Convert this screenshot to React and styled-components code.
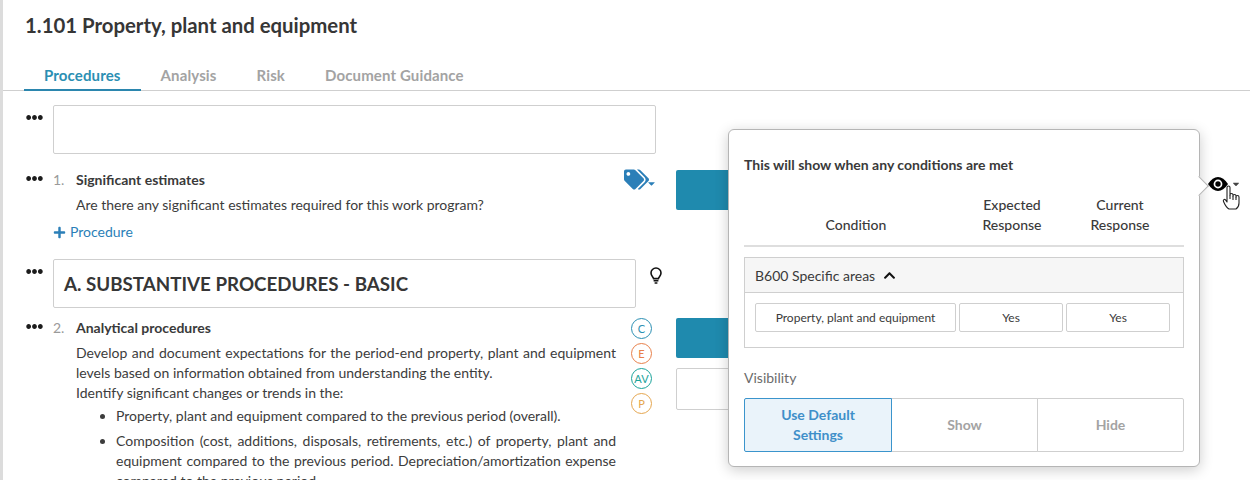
import React from "react";
import styled, { createGlobalStyle } from "styled-components";
import { FaEllipsisH, FaPlus, FaTags, FaChevronUp, FaCaretDown } from "react-icons/fa";

const GlobalStyle = createGlobalStyle`
    html, body {
        margin: 0;
        padding: 0;
        background: #fff;
        font-family: "Lato", "Liberation Sans", sans-serif;
        color: #3a3a3a;
    }
    #root {
        height: 480px;
    }
`;

const Page = styled.div`
    position: relative;
    width: 1250px;
    height: 480px;
    box-sizing: border-box;
    border-left: 3px solid #dcdcdc;
    overflow: hidden;
`;

const Title = styled.h1`
    margin: 0;
    padding: 13px 0 0 22px;
    height: 48px;
    font-size: 20.35px;
    line-height: 24px;
    font-weight: 700;
    color: #363636;
`;

const Tabs = styled.div`
    display: flex;
    height: 29px;
    padding-left: 21px;
    border-bottom: 1px solid #cfcfcf;
`;

const Tab = styled.div`
    box-sizing: border-box;
    height: 30px;
    padding: 4px 20px 0;
    font-size: 15px;
    letter-spacing: 0.13px;
    line-height: 20px;
    font-weight: 700;
    color: ${(p) => (p.$active ? "#2b8fb3" : "#a3a3a3")};
    border-bottom: ${(p) => (p.$active ? "2px solid #2b86ae" : "none")};
`;

const Body = styled.div`
    display: grid;
    grid-template-columns: 653px 300px;
    column-gap: 20px;
`;

const Rows = styled.div`
    padding-top: 14px;
`;

const Row = styled.div`
    display: flex;
    padding-left: 23px;
    margin-bottom: ${(p) => p.$gap || 0}px;
`;

const Dots = styled.div`
    flex: none;
    width: 27px;
    padding-top: ${(p) => (p.$box ? 4 : 0)}px;
    font-size: 17px;
    line-height: 0;
    color: #1c1c1c;
`;

const EmptyBox = styled.div`
    width: 601px;
    height: 47px;
    border: 1px solid #cfcfcf;
    border-radius: 2px;
`;

const HeadingBox = styled.div`
    flex: none;
    box-sizing: border-box;
    width: 583px;
    height: 49px;
    padding-left: 10px;
    border: 1px solid #cfcfcf;
    border-radius: 2px;
    font-size: 18.75px;
    line-height: 47px;
    font-weight: 700;
    color: #363636;
`;

const Bulb = styled.svg`
    flex: none;
    width: 12px;
    height: 17px;
    margin: 8px 0 0 14px;
    fill: none;
    stroke: #111;
    stroke-width: 1.6;
`;

const Num = styled.div`
    flex: none;
    width: 23px;
    font-size: 14px;
    line-height: 20px;
    color: #9a9a9a;
`;

const Item = styled.div`
    position: relative;
    width: 540px;
`;

const ItemTitle = styled.div`
    font-size: 14px;
    line-height: 20px;
    font-weight: 700;
    color: #3a3a3a;
    margin-bottom: 5px;
`;

const Para = styled.div`
    font-size: 14px;
    line-height: 20px;
    color: #3c3c3c;
    text-align: ${(p) => (p.$justify ? "justify" : "left")};
`;

const BulletList = styled.ul`
    margin: 3px 0 0;
    padding: 0 0 0 40px;
    font-size: 14px;
    line-height: 20px;
    color: #3c3c3c;
    text-align: justify;

    li {
        margin-bottom: 5px;
    }
`;

const AddLink = styled.div`
    display: flex;
    align-items: center;
    gap: 4px;
    margin: 7px 0 0 -23px;
    font-size: 14px;
    line-height: 20px;
    color: #2b7fb8;

    svg {
        font-size: 13px;
    }
`;

const TagButton = styled.div`
    position: absolute;
    top: -3px;
    right: -41px;
    display: flex;
    align-items: flex-end;
    color: #2b7fb8;

    svg:first-child {
        font-size: 25px;
    }
    svg:last-child {
        font-size: 11px;
        margin: 0 0 3px -3px;
        color: #2b7fb8;
    }
`;

const Badges = styled.div`
    position: absolute;
    top: 0;
    right: -36px;
    display: flex;
    flex-direction: column;
    gap: 4px;
`;

const Badge = styled.div`
    box-sizing: border-box;
    width: 21px;
    height: 21px;
    border: 1px solid ${(p) => p.$color};
    border-radius: 50%;
    font-size: 11px;
    line-height: 19px;
    text-align: center;
    color: ${(p) => p.$color};
`;

const Side = styled.div`
    padding-top: 79px;
`;

const TealBlock = styled.div`
    height: 40px;
    margin-bottom: ${(p) => p.$gap || 0}px;
    background: #1f8aae;
    border-radius: 2px;
`;

const SideBox = styled.div`
    height: 40px;
    border: 1px solid #cfcfcf;
    border-radius: 2px;
`;

const Popover = styled.div`
    position: absolute;
    left: 725px;
    top: 129px;
    box-sizing: border-box;
    width: 472px;
    height: 338px;
    padding: 26px 15px 0;
    background: #fff;
    border: 1px solid #b5b5b5;
    border-radius: 6px;
    box-shadow: 0 3px 14px rgba(0, 0, 0, 0.2);

    &::after {
        content: "";
        position: absolute;
        top: 49px;
        right: -7px;
        width: 13px;
        height: 13px;
        background: #fff;
        border-top: 1px solid #b5b5b5;
        border-right: 1px solid #b5b5b5;
        transform: rotate(45deg);
    }
`;

const PopTitle = styled.div`
    font-size: 14px;
    line-height: 18px;
    font-weight: 700;
    color: #3a3a3a;
`;

const HeaderGrid = styled.div`
    display: grid;
    grid-template-columns: 224px 88px 128px;
    align-items: end;
    height: 52px;
    margin-top: 9px;
    padding-bottom: 10px;
    border-bottom: 2px solid #dedede;
`;

const HeaderCell = styled.div`
    font-size: 14px;
    line-height: 20px;
    font-weight: 500;
    text-align: center;
    color: #3a3a3a;
`;

const Accordion = styled.div`
    margin-top: 10px;
    border: 1px solid #cfcfcf;
`;

const AccordionHead = styled.div`
    display: flex;
    align-items: center;
    gap: 8px;
    height: 34px;
    padding-left: 10px;
    background: #f6f6f6;
    border-bottom: 1px solid #cfcfcf;
    font-size: 14px;
    color: #3a3a3a;

    svg {
        font-size: 13px;
        color: #111;
    }
`;

const AccordionBody = styled.div`
    display: grid;
    grid-template-columns: 201px 104px 104px;
    column-gap: 3px;
    padding: 10px 13px 15px 10px;
`;

const ConditionCell = styled.div`
    box-sizing: border-box;
    height: 29px;
    border: 1px solid #cfcfcf;
    border-radius: 2px;
    font-size: 12px;
    line-height: 27px;
    text-align: center;
    color: #3a3a3a;
`;

const VisibilityLabel = styled.div`
    margin-top: 20px;
    font-size: 14px;
    line-height: 20px;
    color: #6b6b6b;
`;

const Segments = styled.div`
    display: grid;
    grid-template-columns: 148px 146px 146px;
    margin-top: 10px;
`;

const Segment = styled.div`
    box-sizing: border-box;
    display: flex;
    align-items: center;
    justify-content: center;
    height: 54px;
    padding: 0 20px;
    margin-left: ${(p) => (p.$first ? 0 : -1)}px;
    border: 1px solid ${(p) => (p.$active ? "#3a94cc" : "#cfcfcf")};
    border-radius: ${(p) => (p.$first ? "2px 0 0 2px" : p.$last ? "0 2px 2px 0" : "0")};
    background: ${(p) => (p.$active ? "#eaf3fa" : "#fff")};
    color: ${(p) => (p.$active ? "#3f8fc9" : "#a3a3a3")};
    font-size: 14px;
    line-height: 20px;
    font-weight: 700;
    text-align: center;
    position: relative;
    z-index: ${(p) => (p.$active ? 1 : 0)};
`;

const EyeToggle = styled.div`
    position: absolute;
    left: 1205px;
    top: 177px;
    z-index: 2;
    display: flex;
    align-items: center;
    gap: 3px;
    color: #000;

    svg:nth-child(2) {
        font-size: 10px;
        color: #444;
    }
`;

const HandCursor = styled.svg`
    position: absolute;
    left: 1219px;
    top: 185px;
    z-index: 3;
    width: 18px;
    height: 25px;
    fill: #fff;
    stroke: #222;
    stroke-width: 1.1;
    stroke-linejoin: round;
`;

const App = () => {
    return (
        <Page>
            <GlobalStyle />
            <Title>1.101 Property, plant and equipment</Title>
            <Tabs>
                <Tab $active>Procedures</Tab>
                <Tab>Analysis</Tab>
                <Tab>Risk</Tab>
                <Tab>Document Guidance</Tab>
            </Tabs>
            <Body>
                <Rows>
                    <Row $gap={16}>
                        <Dots $box><FaEllipsisH /></Dots>
                        <EmptyBox />
                    </Row>
                    <Row $gap={17}>
                        <Dots><FaEllipsisH /></Dots>
                        <Num>1.</Num>
                        <Item>
                            <ItemTitle>Significant estimates</ItemTitle>
                            <Para>Are there any significant estimates required for this work program?</Para>
                            <AddLink><FaPlus />Procedure</AddLink>
                            <TagButton><FaTags /><FaCaretDown /></TagButton>
                        </Item>
                    </Row>
                    <Row $gap={10}>
                        <Dots $box><FaEllipsisH /></Dots>
                        <HeadingBox>A. SUBSTANTIVE PROCEDURES - BASIC</HeadingBox>
                        <Bulb viewBox="0 0 12 17">
                            <path d="M3.6 11.6C3.3 9.8 1 9 1 6a5 5 0 0 1 10 0c0 3-2.3 3.8-2.6 5.6z" />
                            <path d="M3.6 13.8h4.8M4.6 16h2.8" />
                        </Bulb>
                    </Row>
                    <Row>
                        <Dots><FaEllipsisH /></Dots>
                        <Num>2.</Num>
                        <Item>
                            <ItemTitle>Analytical procedures</ItemTitle>
                            <Para $justify>
                                Develop and document expectations for the period-end property, plant and equipment levels based on information obtained from understanding the entity.
                            </Para>
                            <Para>Identify significant changes or trends in the:</Para>
                            <BulletList>
                                <li>Property, plant and equipment compared to the previous period (overall).</li>
                                <li>Composition (cost, additions, disposals, retirements, etc.) of property, plant and equipment compared to the previous period. Depreciation/amortization expense compared to the previous period.</li>
                            </BulletList>
                            <Badges>
                                <Badge $color="#2b8fb3">C</Badge>
                                <Badge $color="#e8804a">E</Badge>
                                <Badge $color="#1aa39a">AV</Badge>
                                <Badge $color="#e5a64f">P</Badge>
                            </Badges>
                        </Item>
                    </Row>
                </Rows>
                <Side>
                    <TealBlock $gap={108} />
                    <TealBlock $gap={10} />
                    <SideBox />
                </Side>
            </Body>
            <Popover>
                <PopTitle>This will show when any conditions are met</PopTitle>
                <HeaderGrid>
                    <HeaderCell>Condition</HeaderCell>
                    <HeaderCell>Expected<br />Response</HeaderCell>
                    <HeaderCell>Current<br />Response</HeaderCell>
                </HeaderGrid>
                <Accordion>
                    <AccordionHead>B600 Specific areas <FaChevronUp /></AccordionHead>
                    <AccordionBody>
                        <ConditionCell>Property, plant and equipment</ConditionCell>
                        <ConditionCell>Yes</ConditionCell>
                        <ConditionCell>Yes</ConditionCell>
                    </AccordionBody>
                </Accordion>
                <VisibilityLabel>Visibility</VisibilityLabel>
                <Segments>
                    <Segment $active $first>Use Default Settings</Segment>
                    <Segment>Show</Segment>
                    <Segment $last>Hide</Segment>
                </Segments>
            </Popover>
            <EyeToggle>
                <svg width="20" height="14" viewBox="0 0 20 14">
                    <path d="M0 7C3 2.400 6.500 0 10 0s7 2.400 10 7c-3 4.600-6.500 7-10 7S3 11.600 0 7z" fill="#000" />
                    <circle cx="10" cy="7" r="4.400" fill="#fff" />
                    <circle cx="10" cy="7" r="2.700" fill="#000" />
                </svg>
                <FaCaretDown />
            </EyeToggle>
            <HandCursor viewBox="0 0 18 25">
                <path d="M5 2.500a1.500 1.500 0 0 1 3 0V10a1.500 1.500 0 0 1 3 0v1a1.500 1.500 0 0 1 3 0v1a1.500 1.500 0 0 1 3 0v6c0 3-1.500 5-3 6H7c-2-1-4-4-5.500-7.500-.7-1.700 1-2.800 2-1.600L5 17z" />
                <path d="M8 10v4M11 11v4M14 12v3" fill="none" />
            </HandCursor>
        </Page>
    );
};

export default App;
